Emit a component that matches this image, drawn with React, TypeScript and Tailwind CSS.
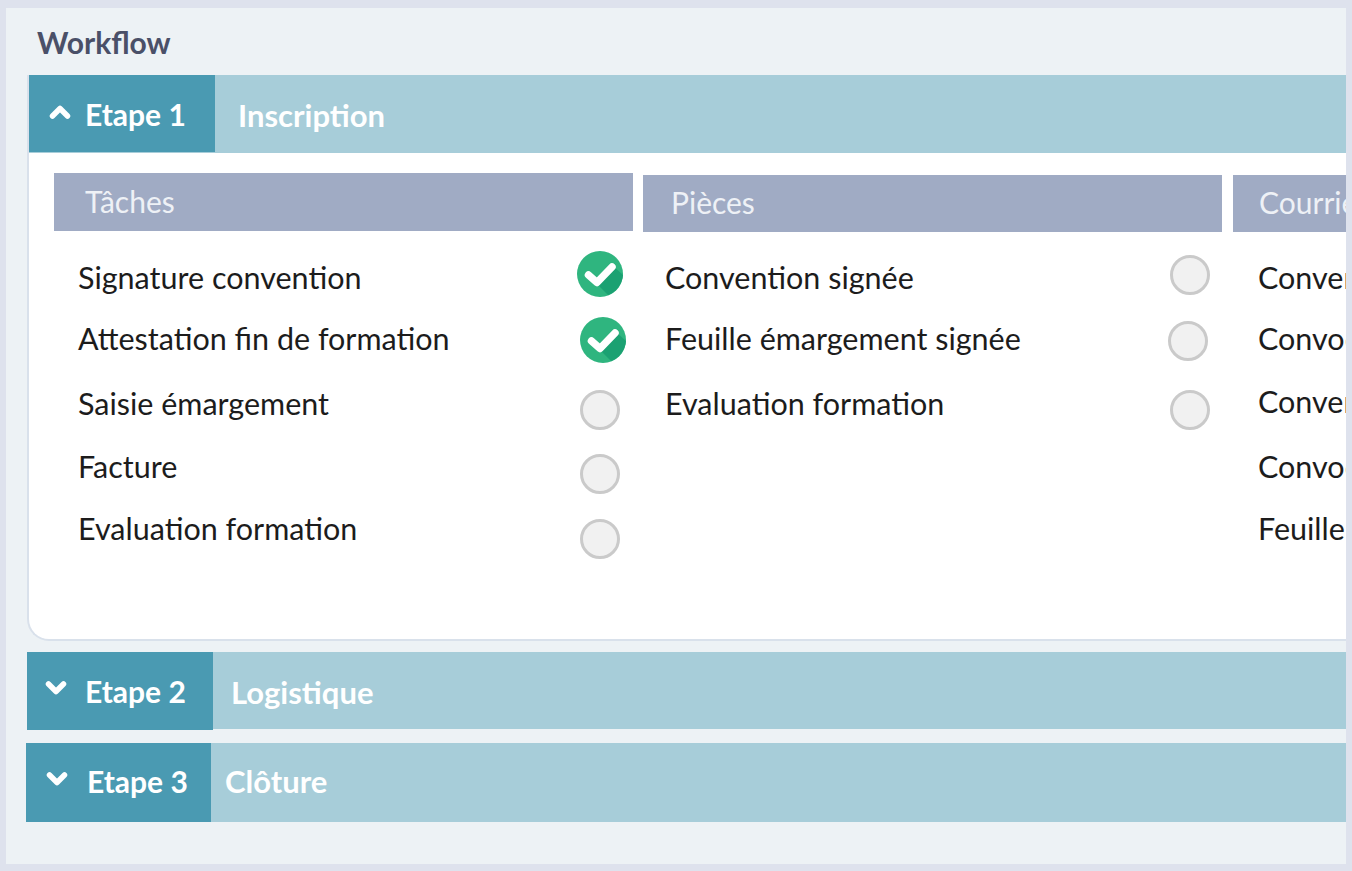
const CheckIcon = ({ className }: { className: string }) => (
  <svg viewBox="0 0 46 46" className={`h-[46px] w-[46px] shrink-0 ${className}`}>
    <circle cx="23" cy="23" r="23" fill="#2fb57f" />
    <path d="M20 33 L31 44 A23 23 0 0 0 46 24 L35 14 Z" fill="#1ba172" />
    <path d="M11.5 24 L20 31.5 L35 16" fill="none" stroke="#fff" strokeWidth="7.5" strokeLinecap="round" strokeLinejoin="round" />
  </svg>
);

const EmptyIcon = ({ className }: { className: string }) => (
  <span className={`h-[40px] w-[40px] shrink-0 rounded-full border-[3px] border-[#cacaca] bg-[#f1f1f1] ${className}`} />
);

const Chevron = ({ up, className }: { up?: boolean; className: string }) => (
  <svg viewBox="0 0 22 14" className={`h-[14px] w-[22px] shrink-0 ${className}`}>
    <path d={up ? "M3.5 11 L11 3.5 L18.5 11" : "M3.5 3 L11 10.5 L18.5 3"} fill="none" stroke="#fff" strokeWidth="5.5" strokeLinecap="round" strokeLinejoin="round" />
  </svg>
);

type Row = { label: string; rowCls: string; done?: boolean; iconCls?: string };

const tasks: Row[] = [
  { label: "Signature convention", rowCls: "h-[61px]", done: true, iconCls: "mt-[4px] mr-[10px]" },
  { label: "Attestation fin de formation", rowCls: "h-[65px]", done: true, iconCls: "mt-[9px] mr-[7px]" },
  { label: "Saisie émargement", rowCls: "h-[63px]", iconCls: "mt-[17px] mr-[13px]" },
  { label: "Facture", rowCls: "h-[62px]", iconCls: "mt-[18px] mr-[13px]" },
  { label: "Evaluation formation", rowCls: "h-[62px]", iconCls: "mt-[21px] mr-[13px]" },
];

const pieces: Row[] = [
  { label: "Convention signée", rowCls: "h-[61px]", iconCls: "mt-[8px] mr-[12px]" },
  { label: "Feuille émargement signée", rowCls: "h-[65px]", iconCls: "mt-[13px] mr-[14px]" },
  { label: "Evaluation formation", rowCls: "h-[63px]", iconCls: "mt-[17px] mr-[12px]" },
];

const mails: Row[] = [
  { label: "Convention", rowCls: "h-[61px]" },
  { label: "Convocation", rowCls: "h-[63px]" },
  { label: "Convention", rowCls: "h-[65px]" },
  { label: "Convocation", rowCls: "h-[62px]" },
  { label: "Feuille émargement", rowCls: "h-[62px]" },
];

const StepHeader = ({ step, title, up, boxCls, titleCls, outerCls, labelCls, chevCls }: {
  step: string; title: string; up?: boolean; boxCls: string; titleCls: string; outerCls: string; labelCls: string; chevCls: string;
}) => (
  <div className={`flex bg-[#a7cdd9] text-white font-bold ${outerCls}`}>
    <div className={`flex shrink-0 items-center bg-[#4a9ab2] text-[30px] ${boxCls}`}>
      <Chevron up={up} className={chevCls} />
      <span className={labelCls}>{step}</span>
    </div>
    <div className={`flex items-center text-[31px] ${titleCls}`}>{title}</div>
  </div>
);

const Column = ({ title, rows, cls, headCls, listCls }: { title: string; rows: Row[]; cls: string; headCls: string; listCls: string }) => (
  <div className={`shrink-0 ${cls}`}>
    <div className={`flex items-center bg-[#a0abc4] pb-[2px] text-[30px] text-[#eef1f6] ${headCls}`}>{title}</div>
    <div className={listCls}>
      {rows.map((r) => (
        <div key={r.label + r.rowCls} className={`flex items-start justify-between whitespace-pre text-[30.5px] leading-[32px] text-[#1c1c1c] ${r.rowCls}`}>
          <span className="mt-[14px]">{r.label}</span>
          {r.iconCls && (r.done ? <CheckIcon className={r.iconCls} /> : <EmptyIcon className={r.iconCls} />)}
        </div>
      ))}
    </div>
  </div>
);

export default function App() {
  return (
    <div className="h-[871px] w-[1352px] overflow-hidden bg-[#dee2ed] pt-2 pr-[6px] pb-[7px] pl-[6px] font-['Lato',sans-serif]">
      <div className="h-full overflow-hidden bg-[#edf2f5]">
        <h2 className="h-[67px] pt-[16px] pl-[31px] text-[30px] leading-[36px] font-bold text-[#4a5068]">Workflow</h2>

        <div className="ml-[21px] h-[566px] overflow-hidden rounded-bl-[22px] border-b-2 border-l-2 border-[#d9e1eb] bg-white">
          <StepHeader
            step="Etape 1"
            title="Inscription"
            up
            outerCls="h-[78px]"
            boxCls="w-[186px] h-[77px] pt-[2px]"
            titleCls="pl-[23px] pt-[2px]"
            chevCls="ml-[20px] mb-[6px]"
            labelCls="ml-[14px]"
          />
          <div className="flex pl-[25px] pt-[20px]">
            <Column title="Tâches" rows={tasks} cls="w-[579px]" headCls="h-[58px] pl-[31px]" listCls="pl-[24px] pt-[16px]" />
            <Column title="Pièces" rows={pieces} cls="ml-[10px] mt-[2px] w-[579px]" headCls="h-[57px] pl-[28px]" listCls="pl-[22px] pt-[15px]" />
            <Column title="Courriers" rows={mails} cls="ml-[11px] mt-[2px] w-[400px]" headCls="h-[57px] pl-[26px]" listCls="pl-[25px] pt-[15px]" />
          </div>
        </div>

        <StepHeader
          step="Etape 2"
          title="Logistique"
          outerCls="ml-[21px] mt-[11px] h-[77px]"
          boxCls="w-[186px] h-[78px]"
          titleCls="pl-[18px] pt-[4px]"
          chevCls="ml-[18px] mb-[6px]"
          labelCls="ml-[18px]"
        />
        <StepHeader
          step="Etape 3"
          title="Clôture"
          outerCls="ml-[20px] mt-[14px] h-[79px]"
          boxCls="w-[185px] h-[79px] pb-[2px]"
          titleCls="pl-[14px] pb-[2px]"
          chevCls="ml-[20px] mb-[6px]"
          labelCls="ml-[19px]"
        />
      </div>
    </div>
  );
}
